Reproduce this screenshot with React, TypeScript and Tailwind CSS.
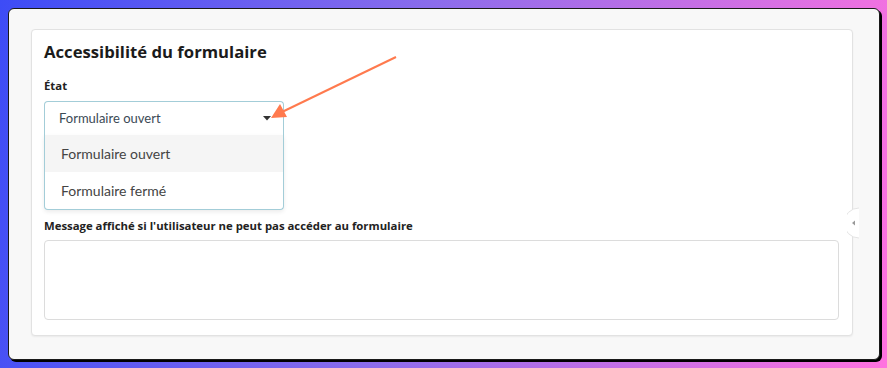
import { useState } from 'react';

const options = ['Formulaire ouvert', 'Formulaire fermé'];
const heading = { fontFamily: '"Open Sans", "Noto Sans", Arial, sans-serif' };

function StateSelect() {
  const [value] = useState(options[0]);
  return (
    <div className="relative w-[240px]">
      <div className="flex h-[34px] items-center justify-between rounded-t-[4px] border border-b-0 border-[#a3cdd8] pl-[14px] pr-[12px] text-[13px] text-[#3b4a55]">
        <span>{value}</span>
        <svg width="8" height="5" viewBox="0 0 8 5" className="mt-[-1px]">
          <path d="M0 0h8L4 4.5z" fill="#333" />
        </svg>
      </div>
      <ul className="absolute left-0 top-[34px] z-10 w-[240px] overflow-hidden rounded-b-[4px] border border-t-0 border-[#a3cdd8] bg-white shadow-[0_2px_4px_rgba(0,0,0,0.08)]">
        {options.map((o, i) => (
          <li
            key={o}
            className={`flex h-[37px] items-center pl-[16px] text-[14px] text-[#444] ${i === 0 ? 'bg-[#f5f5f5]' : ''}`}
          >
            {o}
          </li>
        ))}
      </ul>
    </div>
  );
}

export default function App() {
  return (
    <div
      className="relative h-[368px] w-[887px] bg-[linear-gradient(100deg,#3d4cf6_0%,#8a6cec_45%,#ff72df_100%)] pl-[8px] pt-[8px]"
      style={{ fontFamily: 'Lato, "Open Sans", Arial, sans-serif' }}
    >
      <div className="relative h-[352px] w-[872px] rounded-[6px] border border-[#1a1a1a] bg-[#f8f8f8] pl-[22px] pt-[20px] shadow-[2px_2px_0_#000]">
        <section className="flex h-[307px] w-[822px] flex-col rounded-[4px] border border-[#e2e2e2] bg-white pl-[12px] pr-[13px] pt-[10px] shadow-[0_1px_2px_rgba(0,0,0,0.06)]">
          <h2 style={heading} className="h-[24px] text-[16.7px] font-bold leading-[24px] text-[#1b1b1b]">
            Accessibilité du formulaire
          </h2>
          <label style={heading} className="mt-[12px] h-[20px] text-[11.35px] font-bold leading-[20px] text-[#222]">
            État
          </label>
          <div className="mt-[5px]">
            <StateSelect />
          </div>
          <label style={heading} className="mt-[81px] h-[20px] text-[11.35px] font-bold leading-[20px] text-[#222]">
            Message affiché si l'utilisateur ne peut pas accéder au formulaire
          </label>
          <textarea className="mt-[4px] h-[80px] w-[795px] resize-none rounded-[4px] border border-[#dcdcdc] outline-none" />
        </section>
        <svg className="absolute left-[838px] top-[198px]" width="12" height="32" viewBox="0 0 12 32">
          <path d="M12 1A15 15 0 0 0 12 31" fill="#fff" stroke="#e4e4e4" />
          <path d="M8 13.5v5L5 16z" fill="#999" />
        </svg>
      </div>
      <svg className="pointer-events-none absolute left-0 top-0" width="887" height="368">
        <line x1="396" y1="57" x2="282" y2="112" stroke="#ff7a4e" strokeWidth="2" />
        <path d="M271 118L280 104L287 117z" fill="#ff7a4e" />
      </svg>
    </div>
  );
}
